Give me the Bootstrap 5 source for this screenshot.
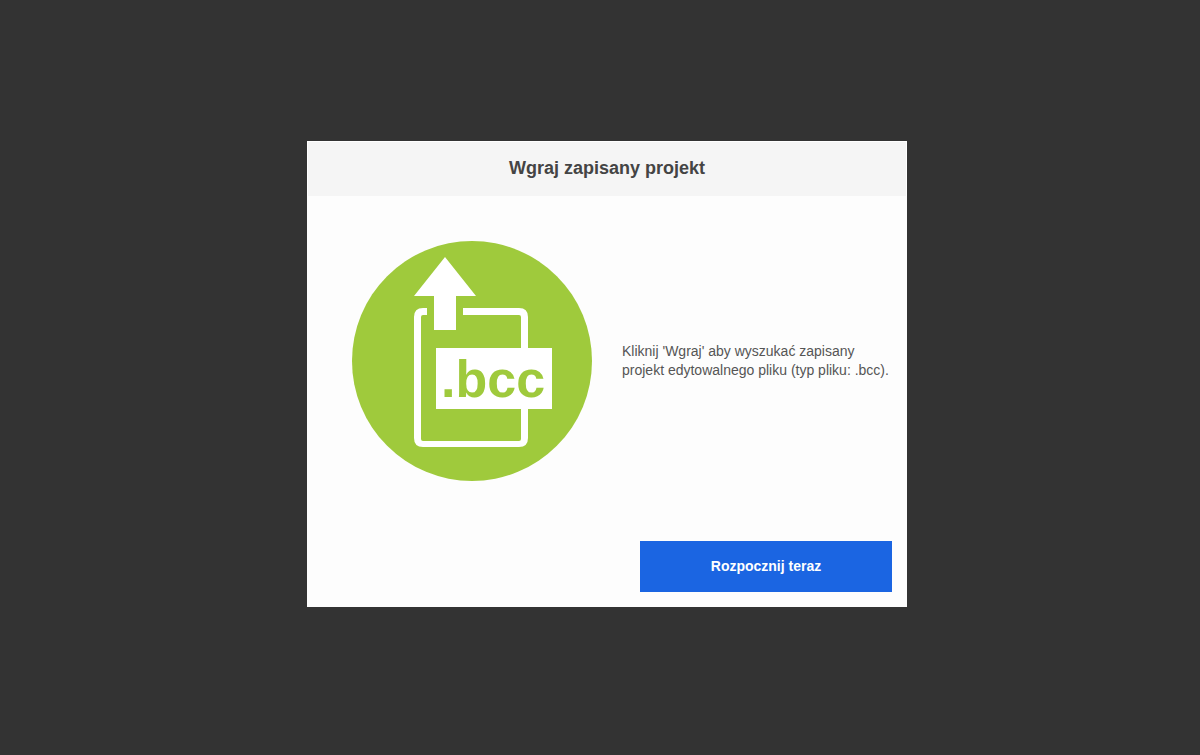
<!DOCTYPE html>
<html lang="pl">
<head>
<meta charset="utf-8">
<meta name="viewport" content="width=device-width, initial-scale=1">
<title>Wgraj zapisany projekt</title>
<link href="https://cdn.jsdelivr.net/npm/bootstrap@5.3.0/dist/css/bootstrap.min.css" rel="stylesheet">
<style>
body { background: #333; color: #555; font-family: "Liberation Sans", Arial, sans-serif; font-size: 14px; line-height: 19px; }
.page { padding: 16px 0 23px 14px; }
.upload-dialog { max-width: 600px; background: #fdfdfd; }
.dialog-head { background: #f5f5f5; padding: 15px 16px 17px; border: 1px solid #fff; border-bottom: 0; }
.dialog-head h1 { font-size: 18px; line-height: 22px; color: #444; }
.dialog-content { gap: 30px; padding: 45px 15px 45px 45px; }
.dialog-foot { padding: 15px; }
.btn-start { --bs-btn-color: #fff; --bs-btn-bg: #1b65e2; --bs-btn-hover-color: #fff; --bs-btn-hover-bg: #1657c4; --bs-btn-active-color: #fff; --bs-btn-active-bg: #1657c4; width: 252px; font-size: 14px; line-height: 19px; padding: 16px; }
.file-label { font: bold 52px "Liberation Sans", Arial, sans-serif; }
</style>
</head>
<body>
<div class="page min-vh-100 d-flex align-items-center justify-content-center">
  <main class="upload-dialog w-100" role="dialog" aria-labelledby="dialog-title">
    <header class="dialog-head text-center">
      <h1 id="dialog-title" class="fw-bold m-0">Wgraj zapisany projekt</h1>
    </header>
    <div class="dialog-content d-flex align-items-center">
      <svg class="flex-shrink-0" width="240" height="240" viewBox="0 0 240 240" role="img" aria-label=".bcc">
        <circle cx="120" cy="120" r="120" fill="#9fca3c"/>
        <path d="M75 67V74H71Q69 74 69 76V198Q69 200 71 200H167Q169 200 169 198V76Q169 74 167 74H111V67H167Q176 67 176 76V197Q176 206 167 206H71Q62 206 62 197V76Q62 67 71 67Z" fill="#fff"/>
        <path d="M93 16L124 55H104V89H82V55H62Z" fill="#fff"/>
        <path d="M84 107H200V168H84Z" fill="#fff"/>
        <text class="file-label" x="89" y="156" fill="#9fca3c">.bcc</text>
      </svg>
      <p class="m-0">Kliknij 'Wgraj' aby wyszukać zapisany projekt edytowalnego pliku (typ pliku: .bcc).</p>
    </div>
    <footer class="dialog-foot d-flex justify-content-end">
      <button type="button" class="btn btn-start border-0 rounded-0 fw-bold">Rozpocznij teraz</button>
    </footer>
  </main>
</div>
<script src="https://cdn.jsdelivr.net/npm/bootstrap@5.3.0/dist/js/bootstrap.bundle.min.js"></script>
</body>
</html>
